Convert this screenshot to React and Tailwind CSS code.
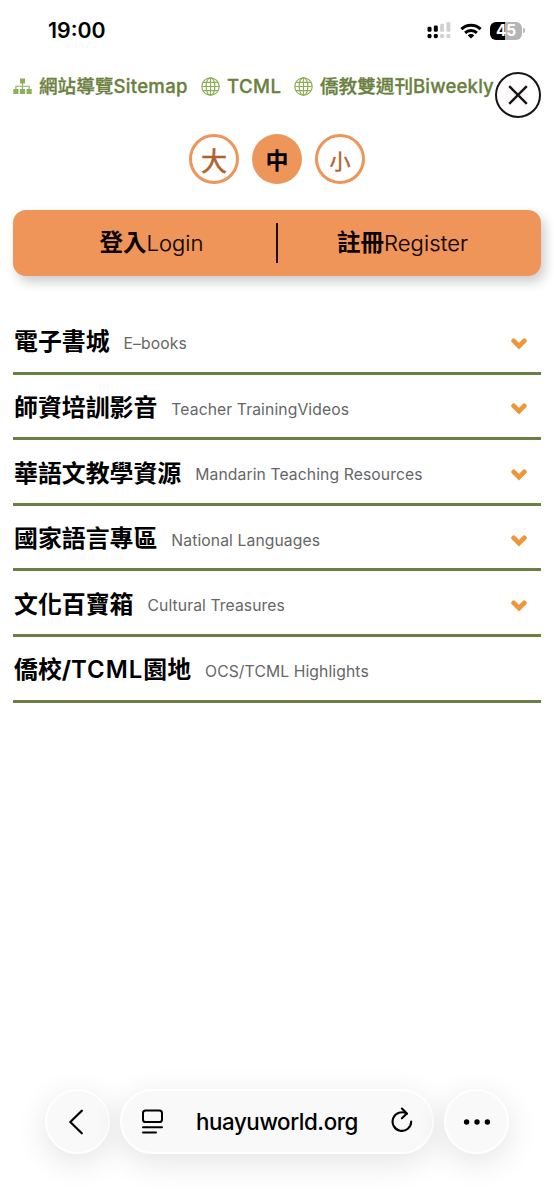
import React from 'react'

const menu = [
  { zh: '電子書城', en: 'E–books', open: true },
  { zh: '師資培訓影音', en: 'Teacher TrainingVideos', open: true },
  { zh: '華語文教學資源', en: 'Mandarin Teaching Resources', open: true },
  { zh: '國家語言專區', en: 'National Languages', open: true },
  { zh: '文化百寶箱', en: 'Cultural Treasures', open: true },
  { zh: '僑校/', latin: 'TCML', rest: '園地', en: 'OCS/TCML Highlights', open: false },
]

function Signal() {
  return (
    <svg width="24" height="17" viewBox="0 0 24 17">
      <g fill="#000">
        <rect x="0.5" y="4.8" width="4" height="5" rx="1.4" />
        <rect x="6.8" y="3.6" width="4" height="6.2" rx="1.4" />
        <rect x="0.5" y="12" width="4" height="4.2" rx="1.4" />
        <rect x="6.8" y="12" width="4" height="4.2" rx="1.4" />
      </g>
      <g fill="#d2d2d2">
        <rect x="13.1" y="1.8" width="4" height="8" rx="1.4" />
        <rect x="19.4" y="0" width="4" height="9.8" rx="1.4" />
        <rect x="13.1" y="12" width="4" height="4.2" rx="1.4" />
        <rect x="19.4" y="12" width="4" height="4.2" rx="1.4" />
      </g>
    </svg>
  )
}

function Wifi() {
  return (
    <svg width="22" height="16" viewBox="0 0 22 16" fill="none" stroke="#000" strokeWidth="3">
      <path d="M1.4 6.1a13.8 13.8 0 0 1 19.2 0" />
      <path d="M5.1 9.9a8.5 8.5 0 0 1 11.8 0" />
      <path d="M11 15.6l-3.2-3.2a4.6 4.6 0 0 1 6.4 0z" fill="#000" stroke="none" />
    </svg>
  )
}

function Battery() {
  return (
    <div className="flex items-center gap-px">
      <div className="flex h-[18px] w-[32px] items-center justify-center rounded-[6px] bg-linear-to-r from-black from-46% to-[#b5b5b5] to-46% font-['Inter'] text-[15.5px] leading-none font-bold tracking-[-0.2px] text-white">
        45
      </div>
      <div className="h-[5px] w-[2px] rounded-r-full bg-[#b5b5b5]" />
    </div>
  )
}

function Sitemap() {
  return (
    <svg width="19" height="17" viewBox="0 0 19 17" fill="#8fae5a">
      <rect x="7" y="0.5" width="5" height="5" />
      <rect x="0.3" y="11" width="5.2" height="5" />
      <rect x="6.9" y="11" width="5.2" height="5" />
      <rect x="13.5" y="11" width="5.2" height="5" />
      <path d="M9.5 5v6M2.9 11.5V8.2h13.2v3.3" fill="none" stroke="#8fae5a" strokeWidth="1.1" />
    </svg>
  )
}

function Globe() {
  return (
    <svg width="19" height="19" viewBox="0 0 19 19" fill="none" stroke="#8fae5a" strokeWidth="1.2">
      <circle cx="9.5" cy="9.5" r="8.7" />
      <ellipse cx="9.5" cy="9.5" rx="4.4" ry="8.7" />
      <path d="M9.5 0.8v17.4M0.8 9.5h17.4M2 5.4h15M2 13.6h15" />
    </svg>
  )
}

function Chevron() {
  return (
    <svg className="mt-[7px]" width="16" height="12" viewBox="0 0 16 12" fill="none" stroke="#ef963b" strokeWidth="4.8" strokeLinecap="round">
      <path d="M2.7 2.9L8 8.1l5.3-5.2" strokeLinejoin="miter" />
    </svg>
  )
}

function StatusBar() {
  return (
    <header className="flex h-[61px] items-center pl-[48px]">
      <span className="w-[379px] font-['Inter'] text-[21.3px] font-semibold">19:00</span>
      <div className="flex items-center">
        <Signal />
        <div className="ml-[9px] mr-[8px]">
          <Wifi />
        </div>
        <Battery />
      </div>
    </header>
  )
}

function TopLinks() {
  return (
    <nav className="flex h-[50px] items-center pt-px pl-[13px] text-[18.6px] font-medium whitespace-nowrap text-[#6b7f3f] [-webkit-text-stroke:0.3px_#6b7f3f]">
      <a className="flex w-[188px] items-center gap-[7px]">
        <Sitemap />
        <span>
          網站導覽<span className="tracking-[0.3px]">Sitemap</span>
        </span>
      </a>
      <a className="flex w-[93px] items-center gap-[7px]">
        <Globe />
        <span className="tracking-[0.4px]">TCML</span>
      </a>
      <a className="flex items-center gap-[7px]">
        <Globe />
        <span>
          僑教雙週刊<span className="tracking-[0.15px]">Biweekly</span>
        </span>
      </a>
    </nav>
  )
}

function FontSizes() {
  return (
    <div className="mt-[23px] flex justify-center gap-[13px] leading-none">
      <button className="h-[50px] w-[50px] rounded-full border-[3px] border-[#ee9559] pt-[6px] text-[26px] text-[#ad6230] [-webkit-text-stroke:0.6px_#ad6230]">大</button>
      <button className="h-[50px] w-[50px] rounded-full bg-[#ee9559] pt-1 text-[23px] font-bold text-black">中</button>
      <button className="h-[50px] w-[50px] rounded-full border-[3px] border-[#ee9559] pt-1 text-[21px] text-[#ad6230] [-webkit-text-stroke:0.4px_#ad6230]">小</button>
    </div>
  )
}

function Account() {
  return (
    <div className="mx-[13px] mt-[26px] flex h-[66px] items-center rounded-[13px] bg-[#f0955a] text-[23.5px] leading-none text-[#0c0402] shadow-[4px_6px_12px_rgba(0,0,0,0.2)]">
      <a className="flex w-[263px] items-baseline justify-center pl-[14px]">
        <b>登入</b>
        <span className="text-[22px] font-light [-webkit-text-stroke:0.2px]">Login</span>
      </a>
      <div className="h-[40px] w-[2px] bg-[#1c0d05]" />
      <a className="flex w-[263px] items-baseline justify-center pr-[14px]">
        <b>註冊</b>
        <span className="text-[22px] font-light tracking-[0.1px] [-webkit-text-stroke:0.2px]">Register</span>
      </a>
    </div>
  )
}

function BrowserBar() {
  const glass = 'rounded-full border-2 border-white bg-[#f9f9f9] shadow-[0_8px_32px_rgba(0,0,0,0.11)]'
  return (
    <footer className="mt-auto mb-[45px] flex justify-center gap-[10px] text-black">
      <button className={`flex h-[65px] w-[65px] items-center justify-center pr-[2px] ${glass}`}>
        <svg width="16" height="26" viewBox="0 0 16 26" fill="none" stroke="currentColor" strokeWidth="2.2" strokeLinecap="round" strokeLinejoin="round">
          <path d="M12.8 1.7L1.3 13l11.5 11.3" />
        </svg>
      </button>
      <div className={`flex h-[65px] w-[314px] items-center pl-[20px] ${glass}`}>
        <svg width="21" height="25" viewBox="0 0 21 25" fill="none" stroke="currentColor" strokeWidth="2" strokeLinecap="round">
          <rect x="1" y="1.5" width="19" height="11.5" rx="2.6" />
          <path d="M1 18.3h19M1 23.5h13" />
        </svg>
        <span className="ml-[33px] w-[195px] font-['Inter'] text-[22.3px] font-medium tracking-[-0.4px]">huayuworld.org</span>
        <svg className="mb-[3px]" width="22" height="26" viewBox="0 0 22 26" fill="none" stroke="currentColor" strokeWidth="2.1" strokeLinecap="round" strokeLinejoin="round">
          <path d="M20.2 14.6A9.3 9.3 0 1 1 15.8 6.7" />
          <path d="M10.9 1.5l5 5-5 4.8" />
        </svg>
      </div>
      <button className={`flex h-[65px] w-[65px] items-center justify-center ${glass}`}>
        <svg width="28" height="6" viewBox="0 0 28 6" fill="currentColor">
          <circle cx="3.6" cy="3" r="2.7" />
          <circle cx="14" cy="3" r="2.7" />
          <circle cx="24.4" cy="3" r="2.7" />
        </svg>
      </button>
    </footer>
  )
}

export default function App() {
  return (
    <div className="relative flex h-[1199px] w-[554px] flex-col overflow-hidden bg-white font-['Inter','Noto_Sans_CJK_TC',sans-serif]">
      <StatusBar />
      <TopLinks />
      <button className="absolute top-[72px] left-[495px] flex h-[46px] w-[46px] items-center justify-center rounded-full border-[2.5px] border-[#191313] bg-white">
        <svg width="20" height="20" viewBox="0 0 20 20" stroke="#191313" strokeWidth="2.4">
          <path d="M1.2 1.2l17.6 17.6M18.8 1.2L1.2 18.8" />
        </svg>
      </button>
      <FontSizes />
      <Account />
      <ul className="mx-[13px] mt-[33px]">
        {menu.map((item) => (
          <li key={item.zh} className="flex h-[65.6px] items-center border-b-[3px] border-[#6a7f44] pr-[14px] pl-px">
            <span className="pt-[4px] text-[23.9px] font-bold">
              {item.zh}
              {item.latin && <span className="font-semibold tracking-[1px]">{item.latin}</span>}
              {item.rest}
            </span>
            <span className="ml-[14px] flex-1 pt-[7px] text-[15.7px] tracking-[0.1px] text-[#666]">{item.en}</span>
            {item.open && <Chevron />}
          </li>
        ))}
      </ul>
      <BrowserBar />
    </div>
  )
}
